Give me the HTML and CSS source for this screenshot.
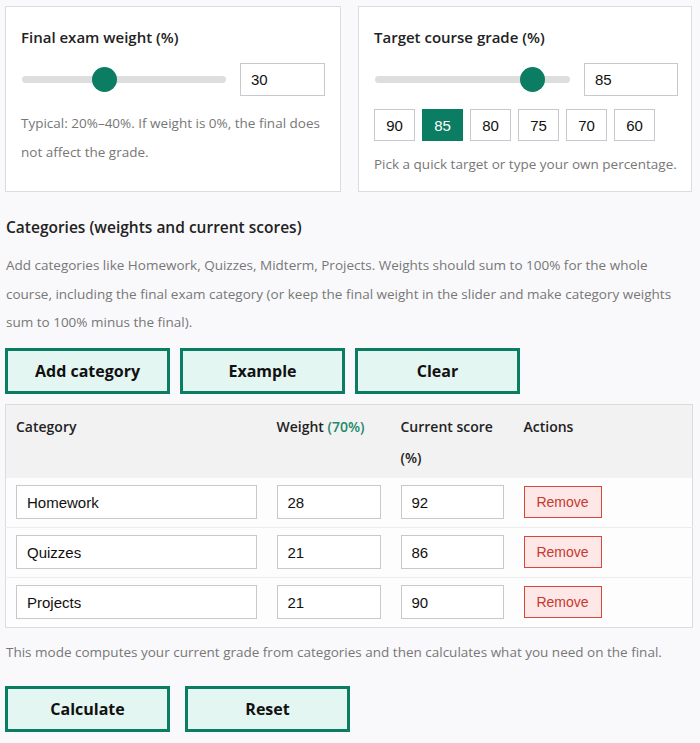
FILE: index.html
```html
<!DOCTYPE html>
<html lang="en">
<head>
<meta charset="utf-8">
<title>Final grade calculator</title>
<link rel="stylesheet" href="styles.css">
</head>
<body>
<main class="page">
  <section class="cards">
    <div class="card">
      <h3 class="card-title">Final exam weight (%)</h3>
      <div class="slider-row">
        <input class="range" type="range" min="0" max="77" value="30">
        <input class="num num-a" type="text" value="30">
      </div>
      <p class="hint hint-a">Typical: 20%–40%. If weight is 0%, the final does not affect the grade.</p>
    </div>
    <div class="card">
      <h3 class="card-title">Target course grade (%)</h3>
      <div class="slider-row">
        <input class="range range-b" type="range" min="0" max="100" value="85">
        <input class="num num-b" type="text" value="85">
      </div>
      <div class="quick">
        <button class="chip">90</button>
        <button class="chip active">85</button>
        <button class="chip">80</button>
        <button class="chip">75</button>
        <button class="chip">70</button>
        <button class="chip">60</button>
      </div>
      <p class="hint hint-b">Pick a quick target or type your own percentage.</p>
    </div>
  </section>

  <h3 class="section-title">Categories (weights and current scores)</h3>
  <p class="para">Add categories like Homework, Quizzes, Midterm, Projects. Weights should sum to 100% for the whole course, including the final exam category (or keep the final weight in the slider and make category weights sum to 100% minus the final).</p>

  <div class="btn-row">
    <button class="btn">Add category</button>
    <button class="btn">Example</button>
    <button class="btn">Clear</button>
  </div>

  <table class="cat-table">
    <colgroup>
      <col class="c1"><col class="c2"><col class="c3"><col class="c4">
    </colgroup>
    <thead>
      <tr>
        <th>Category</th>
        <th>Weight <span class="sum">(70%)</span></th>
        <th>Current score (%)</th>
        <th>Actions</th>
      </tr>
    </thead>
    <tbody>
      <tr>
        <td><input class="cell" type="text" value="Homework"></td>
        <td><input class="cell" type="text" value="28"></td>
        <td><input class="cell" type="text" value="92"></td>
        <td><button class="remove">Remove</button></td>
      </tr>
      <tr>
        <td><input class="cell" type="text" value="Quizzes"></td>
        <td><input class="cell" type="text" value="21"></td>
        <td><input class="cell" type="text" value="86"></td>
        <td><button class="remove">Remove</button></td>
      </tr>
      <tr>
        <td><input class="cell" type="text" value="Projects"></td>
        <td><input class="cell" type="text" value="21"></td>
        <td><input class="cell" type="text" value="90"></td>
        <td><button class="remove">Remove</button></td>
      </tr>
    </tbody>
  </table>

  <p class="para note">This mode computes your current grade from categories and then calculates what you need on the final.</p>

  <div class="btn-row btn-row-b">
    <button class="btn">Calculate</button>
    <button class="btn">Reset</button>
  </div>
</main>
</body>
</html>
```

FILE: styles.css
```css
* { box-sizing: border-box; }
html, body {
  margin: 0;
  padding: 0;
  background: #f9f9fb;
}
body {
  font-family: "Open Sans", "Noto Sans", sans-serif;
  color: #222;
}
.page {
  width: 687px;
  margin-left: 5px;
  padding-top: 6px;
}
.cards {
  display: grid;
  grid-template-columns: 336px 334px;
  column-gap: 17px;
}
.card {
  background: #fff;
  border: 1px solid #dcdcdf;
  padding: 14px 15px 12px;
}
.card-title {
  margin: 0;
  font-size: 15px;
  font-weight: 600;
  line-height: 33px;
  color: #222;
}
.slider-row {
  display: flex;
  align-items: center;
  gap: 14px;
  margin-top: 9px;
}
.range {
  -webkit-appearance: none;
  appearance: none;
  flex: 1;
  margin: 0 0 0 1px;
  height: 24px;
  background: transparent;
}
.range::-webkit-slider-runnable-track {
  height: 7px;
  background: #dedee0;
  border-radius: 4px;
}
.range::-webkit-slider-thumb {
  -webkit-appearance: none;
  appearance: none;
  width: 25px;
  height: 25px;
  border-radius: 50%;
  background: #0b7d62;
  margin-top: -9px;
  border: none;
}
.num {
  height: 33px;
  border: 1px solid #c9c9cc;
  background: #fff;
  font-family: "Liberation Sans", Arial, sans-serif;
  font-size: 15px;
  color: #111;
  padding: 0 10px;
  margin: 0;
}
.num-a { width: 85px; }
.num-b { width: 94px; margin-right: -2px; }
.hint {
  margin: 13px 0 0;
  font-size: 13.5px;
  line-height: 29px;
  color: #777;
}
.hint-a { margin-bottom: 11px; }
.hint-b { white-space: nowrap; }
.quick {
  display: flex;
  gap: 7px;
  margin-top: 13px;
}
.chip {
  width: 41px;
  height: 32px;
  padding: 0;
  border: 1px solid #c9c9cc;
  background: #fff;
  font-family: "Liberation Sans", Arial, sans-serif;
  font-size: 15px;
  color: #111;
}
.chip.active {
  background: #0b7d62;
  border-color: #0b7d62;
  color: #fff;
}
.quick + .hint { margin-top: 9px; }

.section-title {
  margin: 18px 0 0 1px;
  font-size: 15.5px;
  font-weight: 600;
  line-height: 35px;
  color: #222;
}
.para {
  margin: 6px 0 0 1px;
  font-size: 13.5px;
  line-height: 28.6px;
  color: #777;
}
.btn-row {
  display: flex;
  gap: 10px;
  margin-top: 11px;
}
.btn {
  width: 165px;
  height: 46px;
  border: 3px solid #0b7d62;
  background: #e4f6f1;
  font-family: "Open Sans", "Noto Sans", sans-serif;
  font-size: 16px;
  font-weight: 700;
  color: #111;
  padding: 0;
}
.cat-table {
  width: 687px;
  margin-top: 10px;
  border-collapse: collapse;
  table-layout: fixed;
  border: 1px solid #dcdcdf;
  background: #fdfdfd;
}
.c1 { width: 261px; }
.c2 { width: 124px; }
.c3 { width: 123px; }
.c4 { width: 179px; }
.cat-table th {
  background: #f2f2f3;
  text-align: left;
  vertical-align: top;
  font-size: 14px;
  font-weight: 600;
  line-height: 30.8px;
  padding: 7px 10px 5px;
  color: #222;
}
.sum {
  color: #23896b;
  font-weight: 600;
}
.cat-table td {
  padding: 7px 10px 8px;
  border-top: 1px solid #ececee;
  vertical-align: middle;
}
.cat-table thead + tbody tr:first-child td { border-top: none; }
.cell {
  display: block;
  width: 100%;
  height: 34px;
  margin: 0;
  border: 1px solid #c9c9cc;
  background: #fff;
  padding: 0 10px;
  font-family: "Liberation Sans", Arial, sans-serif;
  font-size: 15px;
  color: #111;
}
.remove {
  display: block;
  width: 78px;
  height: 32px;
  padding: 0;
  border: 1px solid #d6463c;
  background: #fde7e7;
  color: #c9382d;
  font-family: "Liberation Sans", Arial, sans-serif;
  font-size: 14px;
}
.note { margin-top: 10px; }
.btn-row-b {
  gap: 15px;
  margin-top: 19px;
}
```
